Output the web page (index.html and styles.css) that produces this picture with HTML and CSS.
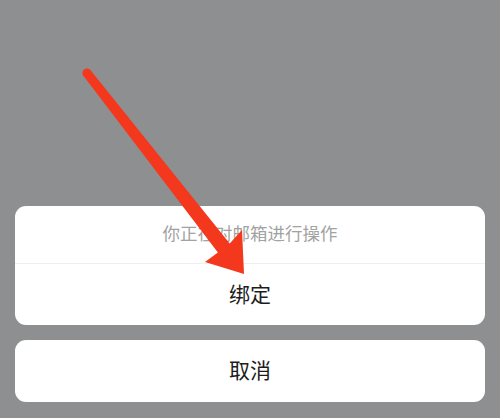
FILE: index.html
```html
<!DOCTYPE html>
<html lang="zh">
<head>
<meta charset="utf-8">
<link rel="stylesheet" href="styles.css">
</head>
<body>
<div class="screen">
  <div class="sheet">
    <div class="group">
      <div class="title">你正在对邮箱进行操作</div>
      <div class="action">绑定</div>
    </div>
    <div class="group">
      <div class="action cancel">取消</div>
    </div>
  </div>
  <svg class="arrow" width="500" height="418" viewBox="0 0 500 418">
    <circle cx="87" cy="73" r="4.6" fill="#f4381d"/>
    <polygon fill="#f4381d" points="90.6,70.2 229.7,243.4 242,230 244,274 205,262 217.9,252.6 83.4,75.8"/>
  </svg>
</div>
</body>
</html>
```

FILE: styles.css
```css
html, body {
  margin: 0;
  padding: 0;
}
body {
  width: 500px;
  height: 418px;
  overflow: hidden;
  background: #8e8f91;
  font-family: "Noto Sans CJK SC", "Noto Sans", sans-serif;
}
.screen {
  position: relative;
  width: 500px;
  height: 418px;
  display: flex;
  flex-direction: column;
  justify-content: flex-end;
}
.sheet {
  display: flex;
  flex-direction: column;
  gap: 15px;
  padding: 0 15px 16px;
}
.group {
  background: #fff;
  border-radius: 11px;
  overflow: hidden;
}
.title {
  height: 58px;
  box-sizing: border-box;
  padding-bottom: 5px;
  display: flex;
  align-items: center;
  justify-content: center;
  font-size: 17.5px;
  color: #a2a2a2;
  border-bottom: 1px solid #efefef;
}
.action {
  height: 61px;
  box-sizing: border-box;
  padding-bottom: 4px;
  display: flex;
  align-items: center;
  justify-content: center;
  font-size: 21px;
  color: #1c1c1c;
}
.cancel {
  height: 62px;
}
.arrow {
  position: absolute;
  left: 0;
  top: 0;
  pointer-events: none;
}
```
